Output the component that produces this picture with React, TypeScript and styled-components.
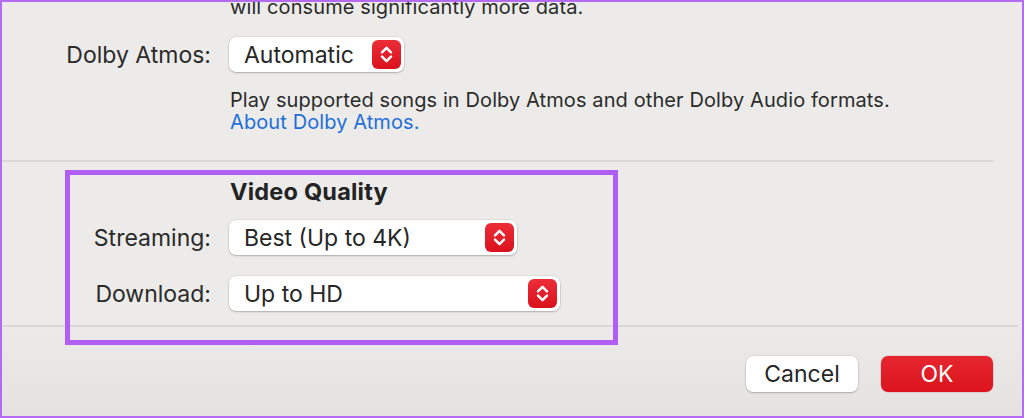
import React from "react";
import styled, { createGlobalStyle } from "styled-components";

const GlobalStyle = createGlobalStyle`
  html, body {
    margin: 0;
    padding: 0;
    background: #ecebe9;
  }
  body {
    font-family: Inter, "Liberation Sans", Arial, sans-serif;
    -webkit-font-smoothing: antialiased;
  }
  * { box-sizing: border-box; }
`;

const Window = styled.div`
  position: relative;
  width: 1024px;
  height: 418px;
  overflow: hidden;
  background: #ecebe9;
  border: 2px solid #b46bf2;
  display: flex;
  flex-direction: column;
  color: #262626;
`;

const Section = styled.div<{ $pt?: number; $mt?: number }>`
  display: grid;
  grid-template-columns: 209px auto;
  column-gap: 18px;
  align-items: center;
  justify-items: start;
  padding-top: ${(p) => p.$pt ?? 0}px;
  margin-top: ${(p) => p.$mt ?? 0}px;
`;

const Label = styled.div`
  justify-self: end;
  font-size: 23px;
  line-height: 28px;
  color: #2a2a2a;
  letter-spacing: 0px;
`;

const Note = styled.div<{ $mt?: number }>`
  grid-column: 2;
  font-size: 20px;
  line-height: 22px;
  letter-spacing: 0.1px;
  color: #2b2b2b;
  padding-left: 1px;
  margin-top: ${(p) => p.$mt ?? 0}px;
`;

const TopNote = styled(Note)`
  line-height: 24px;
`;

const Link = styled.span`
  color: #1f6fd8;
`;

const Title = styled.div`
  grid-column: 2;
  font-size: 23.5px;
  line-height: 28px;
  font-weight: 700;
  color: #232323;
  padding-left: 1px;
  letter-spacing: 0.2px;
`;

const Popup = styled.div<{ $w: number }>`
  width: ${(p) => p.$w}px;
  height: 35px;
  background: #ffffff;
  border-radius: 7px;
  box-shadow: 0 0 0 0.5px rgba(0, 0, 0, 0.1), 0 1px 2px rgba(0, 0, 0, 0.22);
  display: flex;
  align-items: center;
  justify-content: space-between;
  padding: 0 3px 0 15px;
  font-size: 23px;
  color: #262626;
`;

const Stepper = styled.div`
  width: 29px;
  height: 29px;
  border-radius: 6px;
  background: linear-gradient(#ec2d38, #d9121d);
  display: flex;
  align-items: center;
  justify-content: center;
`;

const Separator = styled.div<{ $mr: number; $mt: number }>`
  height: 2px;
  background: #d9d8d6;
  margin-right: ${(p) => p.$mr}px;
  margin-top: ${(p) => p.$mt}px;
  flex: none;
`;

const Footer = styled.div`
  flex: 1;
  display: flex;
  justify-content: flex-end;
  align-items: flex-start;
  gap: 23px;
  padding: 29px 29px 0 0;
  background: linear-gradient(#ebeae9, #e4e3e2);
`;

const Button = styled.button<{ $primary?: boolean }>`
  width: 112px;
  height: 36px;
  border: none;
  border-radius: 7px;
  font-family: Inter, "Liberation Sans", Arial, sans-serif;
  font-size: 23px;
  color: ${(p) => (p.$primary ? "#ffffff" : "#262626")};
  background: ${(p) =>
    p.$primary ? "linear-gradient(#e6262f, #dc141d)" : "#ffffff"};
  box-shadow: ${(p) =>
    p.$primary
      ? "0 0 0 0.5px rgba(160,0,0,0.2)"
      : "0 0 0 0.5px rgba(0,0,0,0.1), 0 1px 2px rgba(0,0,0,0.22)"};
  padding: 0;
`;

const Highlight = styled.div`
  position: absolute;
  left: 63px;
  top: 168px;
  width: 553px;
  height: 175px;
  border: 5px solid #b05ef3;
  pointer-events: none;
`;

const Spacer = styled.div<{ $h: number }>`
  grid-column: 1 / -1;
  height: ${(p) => p.$h}px;
`;

function StepperIcon() {
  return (
    <Stepper>
      <svg width="29" height="29" viewBox="0 0 29 29" fill="none">
        <path
          d="M10 12.4 L14.5 7.9 L19 12.4"
          stroke="#fff"
          strokeWidth="2.5"
          strokeLinecap="round"
          strokeLinejoin="round"
        />
        <path
          d="M10 16.6 L14.5 21.1 L19 16.6"
          stroke="#fff"
          strokeWidth="2.5"
          strokeLinecap="round"
          strokeLinejoin="round"
        />
      </svg>
    </Stepper>
  );
}

function Select({ value, width }: { value: string; width: number }) {
  return (
    <Popup $w={width}>
      <span>{value}</span>
      <StepperIcon />
    </Popup>
  );
}

export default function App() {
  return (
    <>
      <GlobalStyle />
      <Window>
        <Section $mt={-7}>
          <TopNote>will consume significantly more data.</TopNote>
          <Spacer $h={18} />
          <Label>Dolby Atmos:</Label>
          <Select value="Automatic" width={175} />
          <Note $mt={17}>
            Play supported songs in Dolby Atmos and other Dolby Audio formats.
            <br />
            <Link>About Dolby Atmos.</Link>
          </Note>
        </Section>
        <Separator $mr={29} $mt={27} />
        <Section $pt={16}>
          <Title>Video Quality</Title>
          <Spacer $h={14} />
          <Label>Streaming:</Label>
          <Select value="Best (Up to 4K)" width={288} />
          <Spacer $h={21} />
          <Label>Download:</Label>
          <Select value="Up to HD" width={331} />
        </Section>
        <Separator $mr={4} $mt={14} />
        <Footer>
          <Button>Cancel</Button>
          <Button $primary>OK</Button>
        </Footer>
        <Highlight />
      </Window>
    </>
  );
}
